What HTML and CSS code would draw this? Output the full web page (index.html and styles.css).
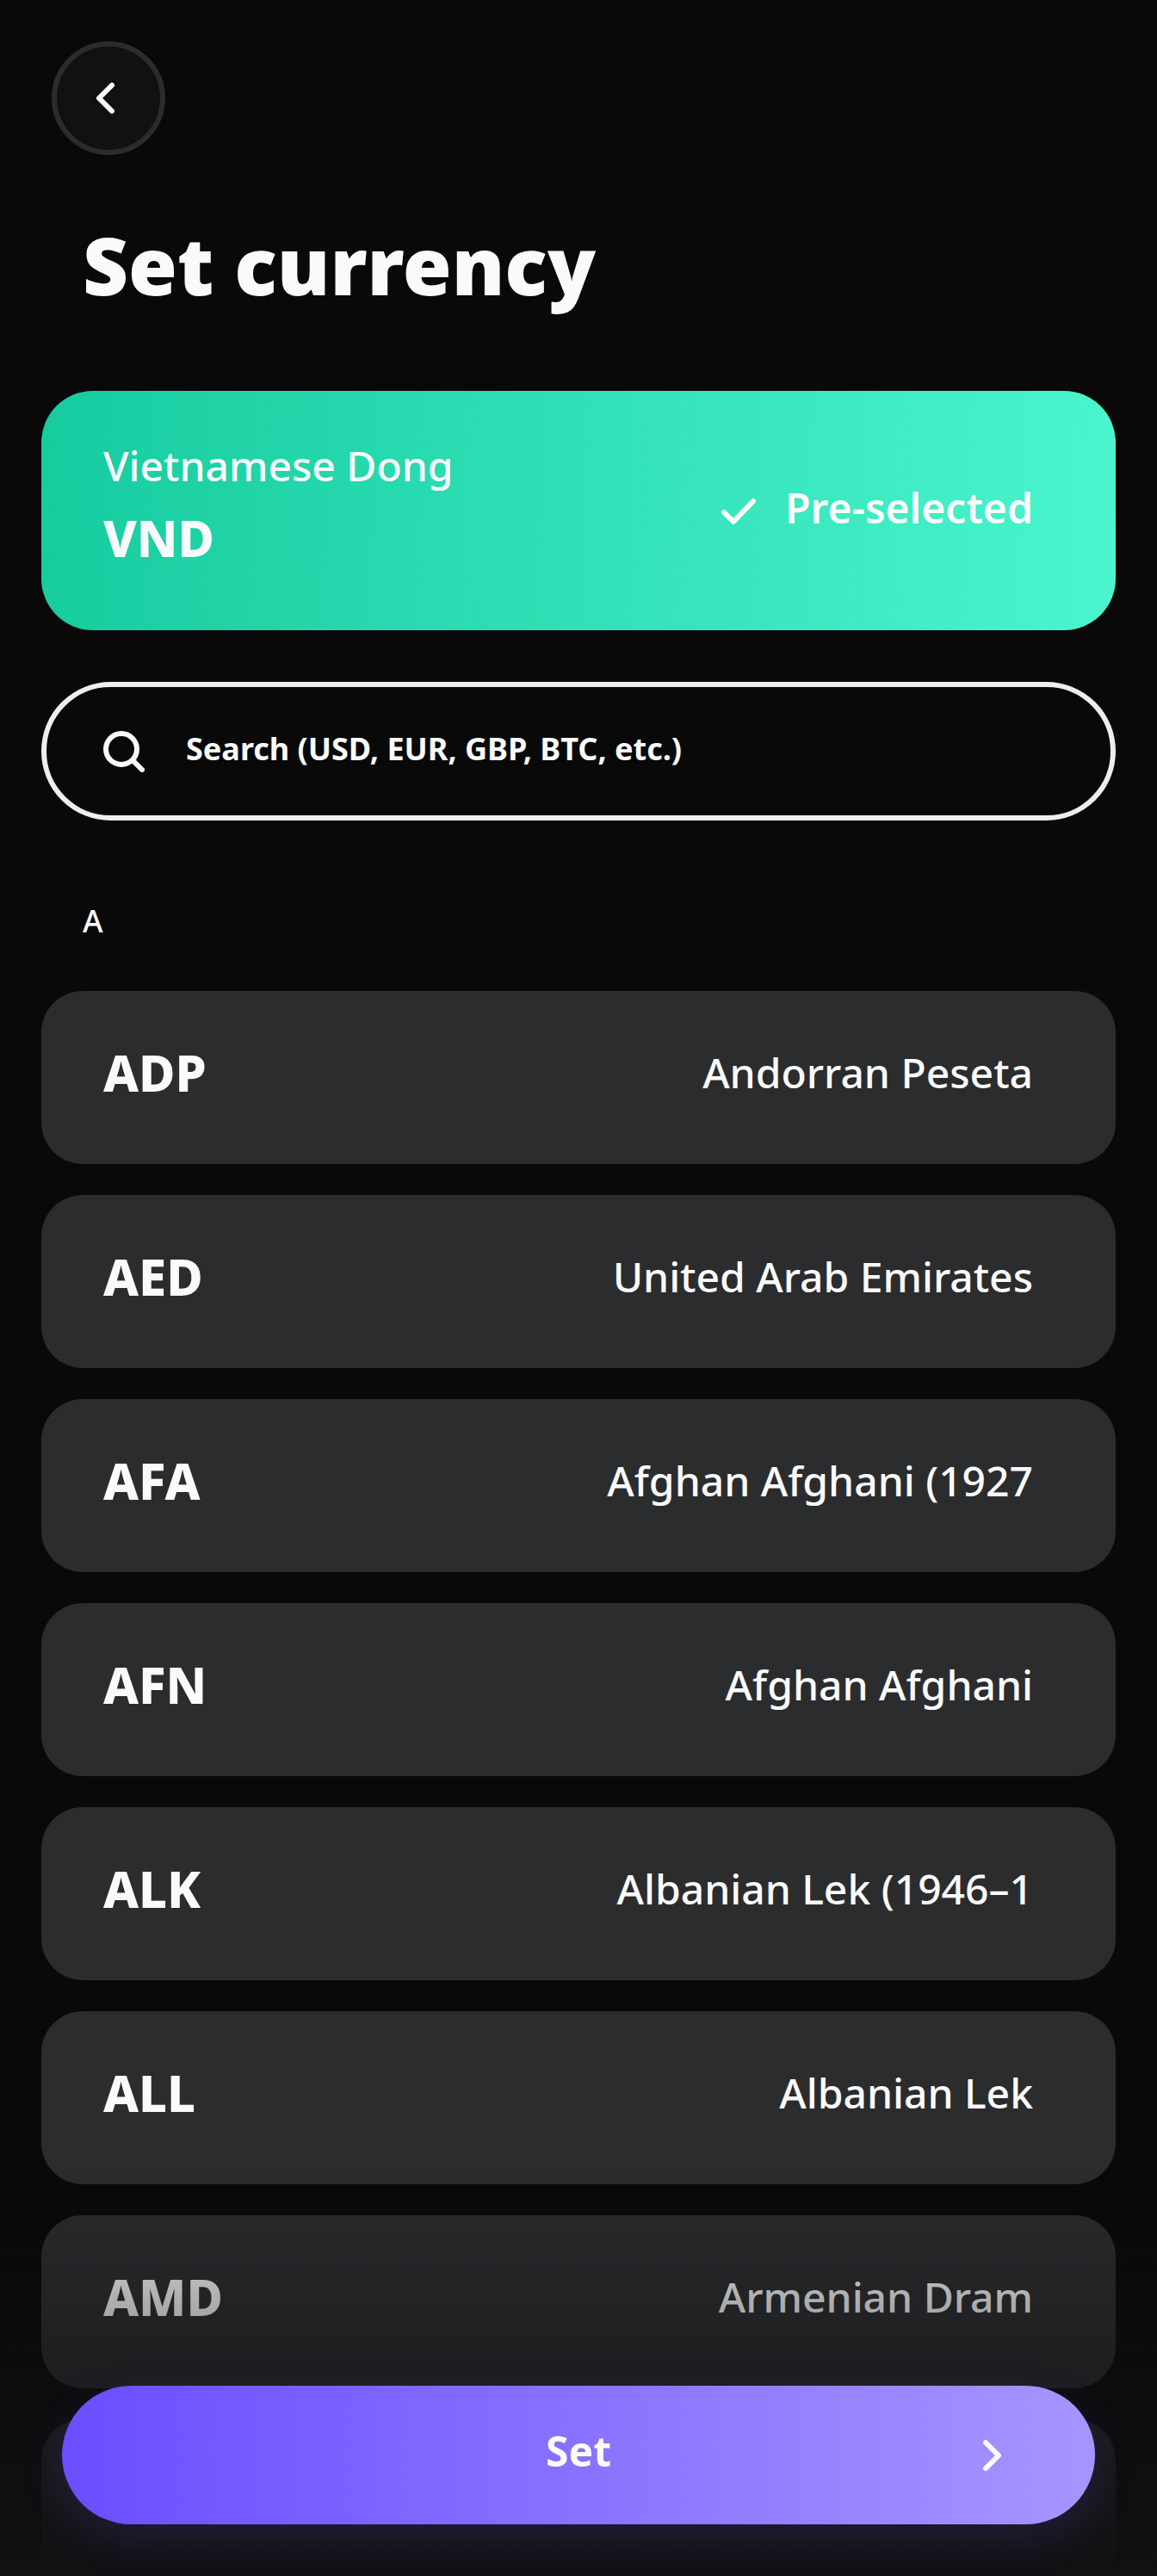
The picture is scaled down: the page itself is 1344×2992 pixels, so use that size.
FILE: index.html
```
<!DOCTYPE html>
<html lang="en">
<head>
  <meta charset="utf-8">
  <meta name="viewport" content="width=device-width, initial-scale=1">
  <title>Set currency</title>
  <link rel="stylesheet" href="styles.css">
</head>
<body>
  <main class="screen">
    <header class="header">
      <button class="back" type="button" aria-label="Back">
        <svg class="icon" viewBox="0 0 48 48" aria-hidden="true"><path d="M28 9 13 24l15 15"/></svg>
      </button>
      <h1 class="title">Set currency</h1>
    </header>

    <section class="selected">
      <div class="selected-currency">
        <p class="selected-name">Vietnamese Dong</p>
        <p class="code">VND</p>
      </div>
      <p class="selected-state">
        <svg class="icon" viewBox="0 0 48 48" aria-hidden="true"><path d="M9 30l11 11 23-24"/></svg>
        Pre-selected
      </p>
    </section>

    <label class="search">
      <svg class="icon" viewBox="0 0 48 48" aria-hidden="true"><circle cx="21" cy="21" r="18"/><path d="M34 34l11 11"/></svg>
      <input class="search-input" type="search" aria-label="Search currencies" placeholder="Search (USD, EUR, GBP, BTC, etc.)">
    </label>

    <h2 class="letter">A</h2>
    <ul class="list">
      <li><button class="row" type="button"><span class="code">ADP</span><span class="name">Andorran Peseta</span></button></li>
      <li><button class="row" type="button"><span class="code">AED</span><span class="name">United Arab Emirates</span></button></li>
      <li><button class="row" type="button"><span class="code">AFA</span><span class="name">Afghan Afghani (1927</span></button></li>
      <li><button class="row" type="button"><span class="code">AFN</span><span class="name">Afghan Afghani</span></button></li>
      <li><button class="row" type="button"><span class="code">ALK</span><span class="name">Albanian Lek (1946–1</span></button></li>
      <li><button class="row" type="button"><span class="code">ALL</span><span class="name">Albanian Lek</span></button></li>
      <li><button class="row" type="button"><span class="code">AMD</span><span class="name">Armenian Dram</span></button></li>
      <li class="row" aria-hidden="true"></li>
    </ul>
  </main>

  <footer class="footer">
    <button class="submit" type="button">
      <span class="submit-label">Set</span>
      <svg class="icon submit-icon" viewBox="0 0 48 48" aria-hidden="true"><path d="M17 9l15 15-15 15"/></svg>
    </button>
  </footer>
</body>
</html>
```
FILE: styles.css
```
* {
  box-sizing: border-box;
  margin: 0;
  padding: 0;
}

:root {
  --bg: #090909;
  --surface: #2b2c2e;
  --text: #fafafa;
}

body {
  background: var(--bg);
  color: var(--text);
  font-family: "Noto Sans", "Open Sans", sans-serif;
  font-size: 48px;
  font-weight: 500;
}

button,
input {
  border: 0;
  color: inherit;
  font: inherit;
}

button {
  cursor: pointer;
}

.screen {
  height: 100vh;
  padding: 48px 48px 0;
  overflow-y: auto;
  scrollbar-width: none;
}

.icon {
  flex: none;
  width: 48px;
  height: 48px;
  fill: none;
  stroke: currentColor;
  stroke-width: 6;
  stroke-linecap: round;
  stroke-linejoin: round;
}

/* Header */

.back {
  display: flex;
  align-items: center;
  justify-content: center;
  width: 132px;
  height: 132px;
  margin-left: 12px;
  border: 6px solid var(--surface);
  border-radius: 50%;
  background: #111113;
}

.title {
  margin: 74px 48px 92px;
  font-size: 92px;
  font-weight: 900;
  line-height: 108px;
}

/* Selected currency */

.selected {
  display: flex;
  align-items: center;
  justify-content: space-between;
  padding: 51px 96px 59px 72px;
  border-radius: 60px;
  background: linear-gradient(92deg, #16cc9f, #4af5cd);
}

.selected-name {
  line-height: 72px;
}

.selected .code {
  line-height: 96px;
}

.selected-state {
  display: flex;
  align-items: center;
  gap: 32px;
  font-weight: 600;
}

.code {
  font-size: 58px;
  font-weight: 800;
}

/* Search */

.search {
  display: flex;
  align-items: center;
  gap: 48px;
  height: 161px;
  margin-top: 60px;
  padding: 0 66px;
  border: 6px solid #eeeef0;
  border-radius: 81px;
}

.search-input {
  flex: 1;
  min-width: 0;
  height: 100%;
  padding-bottom: 6px;
  background: none;
  font-size: 36px;
  font-weight: 700;
  outline: none;
  appearance: none;
}

.search-input::placeholder {
  color: inherit;
  opacity: 1;
}

/* Currency list */

.letter {
  margin: 90px 48px 54px;
  font-size: 36px;
  font-weight: 500;
  line-height: 54px;
}

.list {
  display: flex;
  flex-direction: column;
  gap: 36px;
  list-style: none;
}

.row {
  display: flex;
  align-items: center;
  justify-content: space-between;
  width: 100%;
  min-height: 201px;
  padding: 53px 96px 64px 72px;
  border-radius: 48px;
  background: var(--surface);
}

.name {
  white-space: nowrap;
}

.row .code,
.name {
  line-height: 84px;
}

/* Bottom action */

.footer {
  position: fixed;
  inset: auto 0 0;
  padding: 251px 72px 60px;
  background: linear-gradient(rgba(17, 17, 19, 0), #111113);
  pointer-events: none;
}

.submit {
  display: grid;
  grid-template-columns: 1fr auto 1fr;
  align-items: center;
  width: 100%;
  height: 161px;
  padding: 0 96px;
  border-radius: 81px;
  background: linear-gradient(90deg, #6c4dff, #a795ff);
  box-shadow: 0 16px 48px rgba(108, 77, 255, 0.15);
  pointer-events: auto;
}

.submit-label {
  grid-column: 2;
  padding-bottom: 10px;
  font-weight: 700;
}

.submit-icon {
  justify-self: end;
}
```
